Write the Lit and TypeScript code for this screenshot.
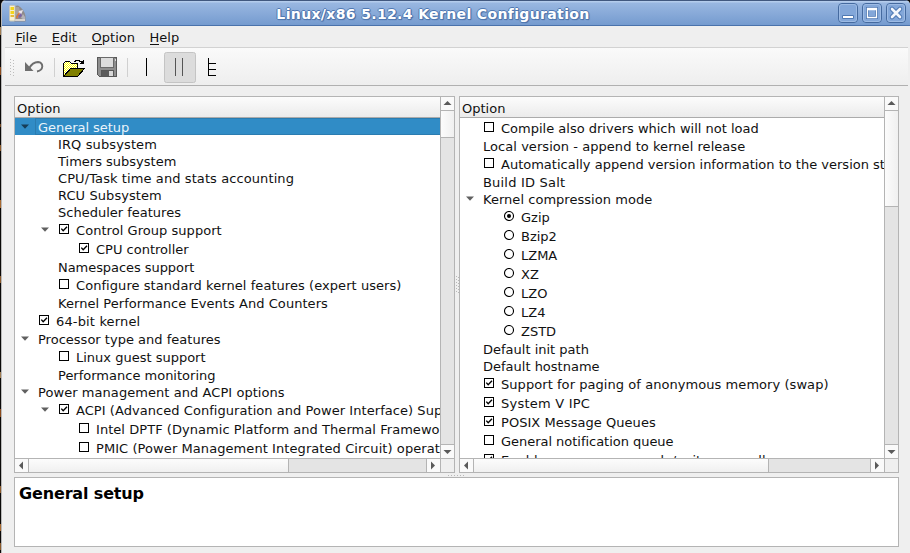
import { LitElement, html, css, svg, nothing } from "lit";
import { customElement, property } from "lit/decorators.js";

type Kind = "none" | "on" | "off" | "dot" | "ring";
interface Row {
  text: string;
  indent: number;
  kind?: Kind;
  open?: boolean;
  selected?: boolean;
  /** extra pixels spread over the label's letters */
  extra?: number;
}

const LEFT: Row[] = [
  { text: "General setup", indent: 23, open: true, selected: true, extra: -0.5 },
  { text: "IRQ subsystem", indent: 43, extra: 1.5 },
  { text: "Timers subsystem", indent: 43 },
  { text: "CPU/Task time and stats accounting", indent: 43, extra: 3.2 },
  { text: "RCU Subsystem", indent: 43, extra: 1 },
  { text: "Scheduler features", indent: 43 },
  { text: "Control Group support", indent: 43, kind: "on", open: true, extra: 1 },
  { text: "CPU controller", indent: 63, kind: "on" },
  { text: "Namespaces support", indent: 43, extra: -1 },
  { text: "Configure standard kernel features (expert users)", indent: 43, kind: "off", extra: 3 },
  { text: "Kernel Performance Events And Counters", indent: 43, extra: 2 },
  { text: "64-bit kernel", indent: 23, kind: "on", extra: 2 },
  { text: "Processor type and features", indent: 23, open: true, extra: 0.3 },
  { text: "Linux guest support", indent: 43, kind: "off" },
  { text: "Performance monitoring", indent: 43 },
  { text: "Power management and ACPI options", indent: 23, open: true, extra: 2 },
  { text: "ACPI (Advanced Configuration and Power Interface) Support", indent: 43, kind: "on", open: true, extra: 3 },
  { text: "Intel DPTF (Dynamic Platform and Thermal Framework) Support", indent: 63, kind: "off", extra: 3 },
  { text: "PMIC (Power Management Integrated Circuit) operation region support", indent: 63, kind: "off", extra: 5 },
];

const RIGHT: Row[] = [
  { text: "Compile also drivers which will not load", indent: 23, kind: "off" },
  { text: "Local version - append to kernel release", indent: 23, extra: 2 },
  { text: "Automatically append version information to the version string", indent: 23, kind: "off" },
  { text: "Build ID Salt", indent: 23, extra: 2.6 },
  { text: "Kernel compression mode", indent: 23, open: true, extra: 0.8 },
  { text: "Gzip", indent: 43, kind: "dot" },
  { text: "Bzip2", indent: 43, kind: "ring" },
  { text: "LZMA", indent: 43, kind: "ring" },
  { text: "XZ", indent: 43, kind: "ring" },
  { text: "LZO", indent: 43, kind: "ring" },
  { text: "LZ4", indent: 43, kind: "ring" },
  { text: "ZSTD", indent: 43, kind: "ring" },
  { text: "Default init path", indent: 23 },
  { text: "Default hostname", indent: 23 },
  { text: "Support for paging of anonymous memory (swap)", indent: 23, kind: "on", extra: 2.6 },
  { text: "System V IPC", indent: 23, kind: "on", extra: 2.8 },
  { text: "POSIX Message Queues", indent: 23, kind: "on", extra: 1 },
  { text: "General notification queue", indent: 23, kind: "off", extra: -0.8 },
  { text: "Enable process_vm_readv/writev syscalls", indent: 23, kind: "on", extra: 3.5 },
];

const mark = (k: Kind) => {
  if (k === "dot" || k === "ring") {
    return svg`<circle cx="5" cy="5" r="4.5" fill="#fff" stroke="#000" stroke-width="1.1"/>
      ${k === "dot" ? svg`<circle cx="5" cy="5" r="2" fill="#000"/>` : nothing}`;
  }
  return svg`<rect x=".5" y=".5" width="9" height="9" fill="#fff" stroke="#000"/>
    ${k === "on" ? svg`<path d="M2.3 4.6 4.2 6.8 8 2.8" fill="none" stroke="#000" stroke-width="1.4"/>` : nothing}`;
};

@customElement("option-tree")
export class OptionTree extends LitElement {
  @property({ attribute: false }) rows: Row[] = [];
  @property({ type: Number }) vthumb = 26;
  @property({ type: Number }) hthumb = 259;

  static styles = css`
    :host { display: grid; grid-template-columns: minmax(0, 1fr) 13px; grid-template-rows: minmax(0, 1fr) 13px;
      gap: 1px; background: #b4b4b4; border: 1px solid #b4b4b4; box-sizing: border-box; }
    .view { background: #fff; overflow: hidden; }
    .head { height: 20px; box-sizing: content-box; border-bottom: 1px solid #ababab; line-height: 24px; padding-left: 2px;
      background: linear-gradient(#fcfcfc, #ebebeb); }
    .row { display: flex; height: 17px; line-height: 20px; white-space: nowrap; }
    .row.tall { height: 19px; line-height: 22px; }
    .lead { flex: none; display: flex; justify-content: flex-end; }
    .arrow { width: 8px; height: 5px; margin: 6px 9px 0 0; fill: #606060; }
    .tall .arrow { margin-top: 7px; }
    .mark { flex: none; width: 10px; height: 10px; margin: 4px 7px 0 1px; }
    .selected { background: #308cc6; color: #e9f3fa; }
    .selected .arrow { fill: #163d57; }
    .selected .cell { box-shadow: inset 1px 1px #2a7cb0, inset 0 -1px #2a7cb0; flex: 1; height: 17px; margin-left: -3px; padding-left: 3px; }
    .v, .h { display: flex; background: #e4e4e4; }
    .v { flex-direction: column; }
    .btn { flex: none; width: 13px; height: 13px; background: #fafafa; display: grid; place-items: center; }
    .btn svg { width: 9px; height: 9px; fill: #5a5a5a; }
    .v .btn:first-child, .v .thumb { border-bottom: 1px solid #b4b4b4; }
    .v .btn:last-child { border-top: 1px solid #b4b4b4; }
    .h .btn:first-child, .h .thumb { border-right: 1px solid #b4b4b4; }
    .h .btn:last-child { border-left: 1px solid #b4b4b4; }
    .v .thumb { background: linear-gradient(90deg, #fcfcfc, #f0f0f0); flex: none; }
    .h .thumb { background: linear-gradient(#fcfcfc, #f0f0f0); flex: none; }
    .gap { flex: 1; }
    .corner { background: #efefef; }
  `;

  render() {
    const tri = (d: string) => html`<div class="btn"><svg viewBox="0 0 9 9"><path d=${d} /></svg></div>`;
    return html`
      <div class="view">
        <div class="head">Option</div>
        ${this.rows.map((r) => html`
          <div class="row ${r.kind ? "tall" : ""} ${r.selected ? "selected" : ""}">
            <div class="lead" style="width:${r.indent}px">
              ${r.open ? html`<svg class="arrow" viewBox="0 0 8 5"><path d="M0 .5H8L4 4.8Z" /></svg>` : nothing}
            </div>
            ${r.kind ? html`<svg class="mark" viewBox="0 0 10 10">${mark(r.kind)}</svg>` : nothing}
            <span class="cell" style="letter-spacing:${((r.extra ?? 0) / r.text.length).toFixed(3)}px">${r.text}</span>
          </div>`)}
      </div>
      <div class="v">
        ${tri("M.5 6 4.5 2 8.5 6Z")}
        <div class="thumb" style="height:${this.vthumb}px"></div><div class="gap"></div>
        ${tri("M.5 3H8.5L4.5 7Z")}
      </div>
      <div class="h">
        ${tri("M6 .5V8.5L2 4.5Z")}
        <div class="thumb" style="width:${this.hthumb}px"></div><div class="gap"></div>
        ${tri("M2 .5V8.5L6 4.5Z")}
      </div>
      <div class="corner"></div>`;
  }
}

@customElement("app-root")
export class AppRoot extends LitElement {
  static styles = css`
    :host { display: flex; height: 553px; width: 910px; overflow: hidden; background: #0a0807;
      font: 13px "DejaVu Sans", sans-serif; color: #111; }
    .desk { width: 1px; flex: none; background: linear-gradient(#0000 27px, #a07c50 27px 35px, #0000 35px 67px, #8c4b1c 67px 75px, #0000 75px 124px,
      #70451f 124px 127px, #0000 127px 145px, #8c5a2a 145px 151px, #0000 151px 200px, #a86a30 200px 208px, #0000 208px 276px, #8c5a2a 276px 283px,
      #0000 283px 372px, #a07c50 372px 378px, #0000 378px 409px, #8c4b1c 409px 417px, #0000 417px 486px, #8c5a2a 486px 493px, #0000 493px 524px, #a86a30 524px 531px, #0000 531px 543px, #8c5a2a 543px 550px, #0000 550px); }
    .win { flex: 1; display: flex; flex-direction: column; background: #efefef; border-left: 1px solid #b9b9b9; border-radius: 5px 5px 0 0; overflow: hidden; min-width: 0; }
    .title { flex: none; height: 26px; box-sizing: border-box; border-top: 1px solid #41587f; border-bottom: 1px solid #4a72ab;
      background: linear-gradient(#b4ccec 0 1px, #99b7e1 2px, #759bcf); display: flex; align-items: center; padding: 0 4px 0 8px; margin-left: -1px; }
    .logo { width: 17px; height: 17px; flex: none; }
    .name { flex: 1; text-align: center; font-size: 14px; letter-spacing: .36px; font-weight: bold; color: #fff; line-height: 24px; padding: 2px 0 0 2px; white-space: nowrap;
      text-shadow: 1px 0 #5079b3, -1px 0 #5079b3, 0 1px #5079b3, 0 -1px #5079b3, 1px 1px 1px #40669c; }
    .wbtns { display: flex; gap: 4px; }
    .wbtns svg { width: 20px; height: 20px; }
    .menu { flex: none; height: 21px; display: flex; line-height: 23px; padding-left: 13.4px; }
    .menu span { margin-right: 14.6px; }
    u { text-decoration: none; box-shadow: 0 -1px inset #111; }
    .bar { flex: none; height: 37px; margin: 0 2px 0 3px; border-top: 1px solid #d2d2d2; border-bottom: 1px solid #b0b0b0;
      background: linear-gradient(#fafafa, #eee); display: block; }
    .bar svg { display: block; width: 903px; height: 37px; }
    .panes { flex: none; display: flex; margin: 10px 0 0 12px; width: 885px; height: 377px; }
    .lt { width: 441px; }
    .rt { width: 440px; }
    .split { width: 4px; display: grid; place-items: center; }
    .hsplit { height: 4px; width: 885px; margin-left: 12px; flex: none; display: grid; place-items: center; }
    .help { flex: none; margin-left: 12px; width: 885px; height: 70px; box-sizing: border-box; border: 1px solid #b4b4b4; background: #fff;
      font-size: 16px; font-weight: bold; letter-spacing: -.15px; line-height: 19px; padding: 6px 4px; color: #000; }
  `;

  render() {
    return html`
      <div class="desk"></div>
      <div class="win">
        <div class="title">
          <svg class="logo" viewBox="0 0 17 17">
            <path d="M6 1 9 .5Q15 4 16.500 11V16.500H5Z" fill="#8f8b8b" />
            <path d="M7 2 10 2 11 6 7 11Z" fill="#a8a3a1" /><path d="M10 6 14 5 12 10 8 13Z" fill="#e9e3ea" />
            <path d="M7 12 10 7 11 9 8 14Z" fill="#d8783c" /><path d="M9 11 12 8 13 11 10 13Z" fill="#7c63a8" />
            <path d="M12 13 14 9 16 12V15Z" fill="#b4b2b8" /><path d="M6 14H16V16H6Z" fill="#d6d2ce" />
            <rect x=".5" y=".5" width="5.5" height="15.5" rx="1" fill="#f6f0d4" stroke="#c9c6b6" />
            <path d="M1.5 2H5V5H1.5ZM1.5 6H5V9H1.5Z" fill="#f4d51c" /><path d="M1.5 10H5V12H1.5Z" fill="#e8b93a" />
          </svg>
          <div class="name">Linux/x86 5.12.4 Kernel Configuration</div>
          <div class="wbtns">
            ${[
              svg`<path d="M4.5 12.5H15.5V15.500H4.500Z" fill="#fff" stroke="#4f79b3"/>`,
              svg`<path d="M5.500 5.500H14.500V14.500H5.500Z" fill="none" stroke="#4f79b3" stroke-width="3"/><path d="M5.500 5.500H14.500V14.500H5.500Z M5.500 6.500H14.500" fill="none" stroke="#fff" stroke-width="1.300"/>`,
              svg`<path d="M6 6 14 14M14 6 6 14" stroke="#4f79b3" stroke-width="4.600" stroke-linecap="round"/><path d="M6 6 14 14M14 6 6 14" stroke="#f4f7fc" stroke-width="2.600" stroke-linecap="round"/>`,
            ].map((g) => html`<svg viewBox="0 0 20 20">
              <rect x=".5" y=".5" width="19" height="19" rx="3.5" fill="#83a7d9" stroke="#456a9f" />
              <rect x="1.5" y="1.5" width="17" height="17" rx="2.5" fill="none" stroke="#9dbbe4" />${g}</svg>`)}
          </div>
        </div>
        <div class="menu"><span><u>F</u>ile</span><span><u>E</u>dit</span><span><u>O</u>ption</span><span><u>H</u>elp</span></div>
        <div class="bar">
          <svg viewBox="5 48 903 37">
            <defs><pattern id="chk" width="2" height="2" patternUnits="userSpaceOnUse"><rect width="2" height="2" fill="#fff" /><path d="M0 0H1V1H0ZM1 1H2V2H1Z" fill="#ffff00" /></pattern></defs>
            <path d="M10.500 59V76M13.500 60V76" stroke="#bdbdbd" stroke-dasharray="1 2" />
            <path d="M54.500 58V77M127.500 58V77" stroke="#d0d0d0" />
            <path d="M29 68.500C32 63 35 62 38 62Q42.300 62.500 42.300 66.500Q42 70.500 37 71.500" fill="none" stroke="#6e6e6e" stroke-width="1.900" />
            <path d="M25 62V71H33.500Z" fill="#6e6e6e" />
            <g shape-rendering="crispEdges">
              <path d="M63.500 76V63.500L65.500 61.500H69.500L71.500 63.500H77.500V68.500H70.500L64 76Z" fill="url(#chk)" stroke="#000" />
              <path d="M64 76.500 70.500 68.500H84.500L77.500 76.500Z" fill="#808000" stroke="#000" />
              <path d="M74 61.500H75.500V60.500H79.500V61.500H81.500V63" fill="none" stroke="#000" />
              <path d="M84 59V64H79Z" fill="#000" />
            </g>
            <g shape-rendering="crispEdges">
              <path d="M97.500 57.500H116.500V76.500H99.500L97.500 74.500Z" fill="#8e8e8e" stroke="#585858" />
              <path d="M100.500 57.500H113.500V67.500H100.500Z" fill="#dcdcdc" stroke="#6a6a6a" />
              <path d="M101.500 70.500H113.500V76.500H101.500Z" fill="#5c5c5c" stroke="#585858" />
              <path d="M109 71H113V76H109Z" fill="#d8d8d8" />
              <path d="M115 59H116V61H115Z" fill="#ddd" />
            </g>
            <rect x="164.500" y="52.500" width="31" height="30" rx="2" fill="#dcdcdc" stroke="#c4c4c4" />
            <path d="M146.500 58V76M208.500 58V76M208 63.500H216M208 69.500H216M208 75.500H216" stroke="#000" fill="none" />
            <path d="M175.500 58V76M182.500 58V76" stroke="#555" />
          </svg>
        </div>
        <div class="panes">
          <option-tree class="lt" .rows=${LEFT} .vthumb=${26} .hthumb=${259}></option-tree>
          <div class="split"><svg width="3" height="18" viewBox="0 0 3 18"><path d="M.5 0V18M2.500 1V18" stroke="#b8b8b8" stroke-dasharray="1 2" /></svg></div>
          <option-tree class="rt" .rows=${RIGHT} .vthumb=${95} .hthumb=${294}></option-tree>
        </div>
        <div class="hsplit"><svg width="18" height="3" viewBox="0 0 18 3"><path d="M0 1.500H18" stroke="#b8b8b8" stroke-dasharray="1 2" /></svg></div>
        <div class="help">General setup</div>
      </div>`;
  }
}
